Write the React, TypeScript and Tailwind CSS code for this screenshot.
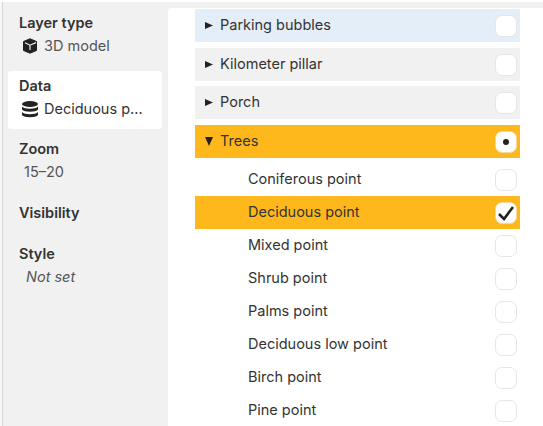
const children = [
  "Coniferous point",
  "Deciduous point",
  "Mixed point",
  "Shrub point",
  "Palms point",
  "Deciduous low point",
  "Birch point",
  "Pine point",
];

function Box({ dark, children }: { dark?: boolean; children?: React.ReactNode }) {
  return (
    <span
      className={`mt-[1px] flex h-[22px] w-[22px] items-center justify-center rounded-[7px] bg-white border ${
        dark ? "border-[#f3d9a0]" : "border-[#e6e6e6]"
      }`}
    >
      {children}
    </span>
  );
}

function Arrow({ open }: { open?: boolean }) {
  return (
    <span className="flex w-[15px] items-center">
      {open ? (
        <svg viewBox="0 0 8 9" className="h-[9px] w-[8px]" fill="#222">
          <path d="M0 0H8L4 9Z" />
        </svg>
      ) : (
        <svg viewBox="0 0 8 7" className="h-[7px] w-[8px]" fill="#222">
          <path d="M0 0 8 3.5 0 7Z" />
        </svg>
      )}
    </span>
  );
}

function GroupRow({ label, className }: { label: string; className: string }) {
  return (
    <div className={`flex h-[33px] shrink-0 items-center pl-[10px] pr-[3px] ${className}`}>
      <Arrow />
      <span className="flex-1 pb-[2px] text-[14.5px] text-[#333]">{label}</span>
      <Box />
    </div>
  );
}

function SideItem({ title, children }: { title: string; children: React.ReactNode }) {
  return (
    <div className="px-[11px]">
      <div className="text-[14.5px] leading-[20px] font-semibold text-[#333]">{title}</div>
      <div className="mt-[3px] text-[14.5px] leading-[20px] text-[#555]">{children}</div>
    </div>
  );
}

export default function App() {
  return (
    <div className="flex h-[426px] w-[543px] overflow-hidden bg-white pt-[2px] font-['Inter',sans-serif]">
      <div className="flex w-[168px] bg-[#f7f7f7] pl-[2px]">
        <div className="flex flex-1 flex-col border-l border-[#d8d8d8] bg-[#f1f1f1] pt-[11px] pl-[5px] pr-[6px]">
          <SideItem title="Layer type">
            <span className="flex items-center gap-[6px] pl-[3px]">
              <svg viewBox="0 0 16 16" className="h-[16px] w-[16px]">
                <path d="M8 .8 14.5 3.5V12.5L8 15.2 1.5 12.5V3.5Z" fill="#222" stroke="#222" strokeLinejoin="round" />
                <path d="M3 4.8 8 7.2 14 4.6M8 7.2V12" fill="none" stroke="#f1f1f1" strokeWidth="1.2" />
              </svg>
              3D model
            </span>
          </SideItem>
          <div className="mt-[15px] h-[58px] rounded-[3px] bg-white pt-[5px]">
            <SideItem title="Data">
              <span className="flex items-center gap-[6px] pl-[3px] text-[#333]">
                <svg viewBox="0 0 16 17" className="h-[17px] w-[16px]" fill="#222">
                  <ellipse cx="8" cy="3" rx="8" ry="3" />
                  <path d="M0 5.5C2 8.5 14 8.5 16 5.5V8.5C14 11.5 2 11.5 0 8.5Z" />
                  <path d="M0 11C2 14 14 14 16 11V14C14 17 2 17 0 14Z" />
                </svg>
                Deciduous p...
              </span>
            </SideItem>
          </div>
          <div className="mt-[10px]">
            <SideItem title="Zoom">
              <span className="pl-[5px]">15–20</span>
            </SideItem>
          </div>
          <div className="mt-[21px]">
            <SideItem title="Visibility">{null}</SideItem>
          </div>
          <div className="mt-[18px]">
            <SideItem title="Style">
              <span className="pl-[7px] italic">Not set</span>
            </SideItem>
          </div>
        </div>
      </div>
      <div className="flex flex-1 flex-col bg-[#f1f1f1]">
        <div className="h-[6px] shrink-0" />
        <div className="flex flex-1 flex-col rounded-tl-[3px] bg-white pl-[27px] pr-[23px] pt-[1px]">
          <GroupRow label="Parking bubbles" className="bg-[#e4eef8]" />
          <GroupRow label="Kilometer pillar" className="mt-[6px] bg-[#f1f1f1]" />
          <GroupRow label="Porch" className="mt-[5px] bg-[#f1f1f1]" />
          <div className="mt-[6px] flex h-[33px] shrink-0 items-center bg-[#ffb81c] pl-[10px] pr-[3px]">
            <Arrow open />
            <span className="flex-1 pb-[2px] text-[14.5px] text-[#333]">Trees</span>
            <Box dark>
              <span className="h-[6px] w-[6px] rounded-full bg-[#222]" />
            </Box>
          </div>
          <div className="mt-[5px] flex flex-col">
            {children.map((name) => (
              <div
                key={name}
                className={`flex h-[33px] shrink-0 items-center pl-[53px] pr-[3px] ${
                  name === "Deciduous point" ? "bg-[#ffb81c]" : ""
                }`}
              >
                <span className="flex-1 pb-[2px] text-[14.5px] text-[#333]">{name}</span>
                <Box dark={name === "Deciduous point"}>
                  {name === "Deciduous point" && (
                    <svg viewBox="0 0 16 15" className="h-[15px] w-[16px]" fill="none" stroke="#222" strokeWidth="2.6">
                      <path d="M1 8 6 13 15 1" />
                    </svg>
                  )}
                </Box>
              </div>
            ))}
          </div>
        </div>
      </div>
    </div>
  );
}
